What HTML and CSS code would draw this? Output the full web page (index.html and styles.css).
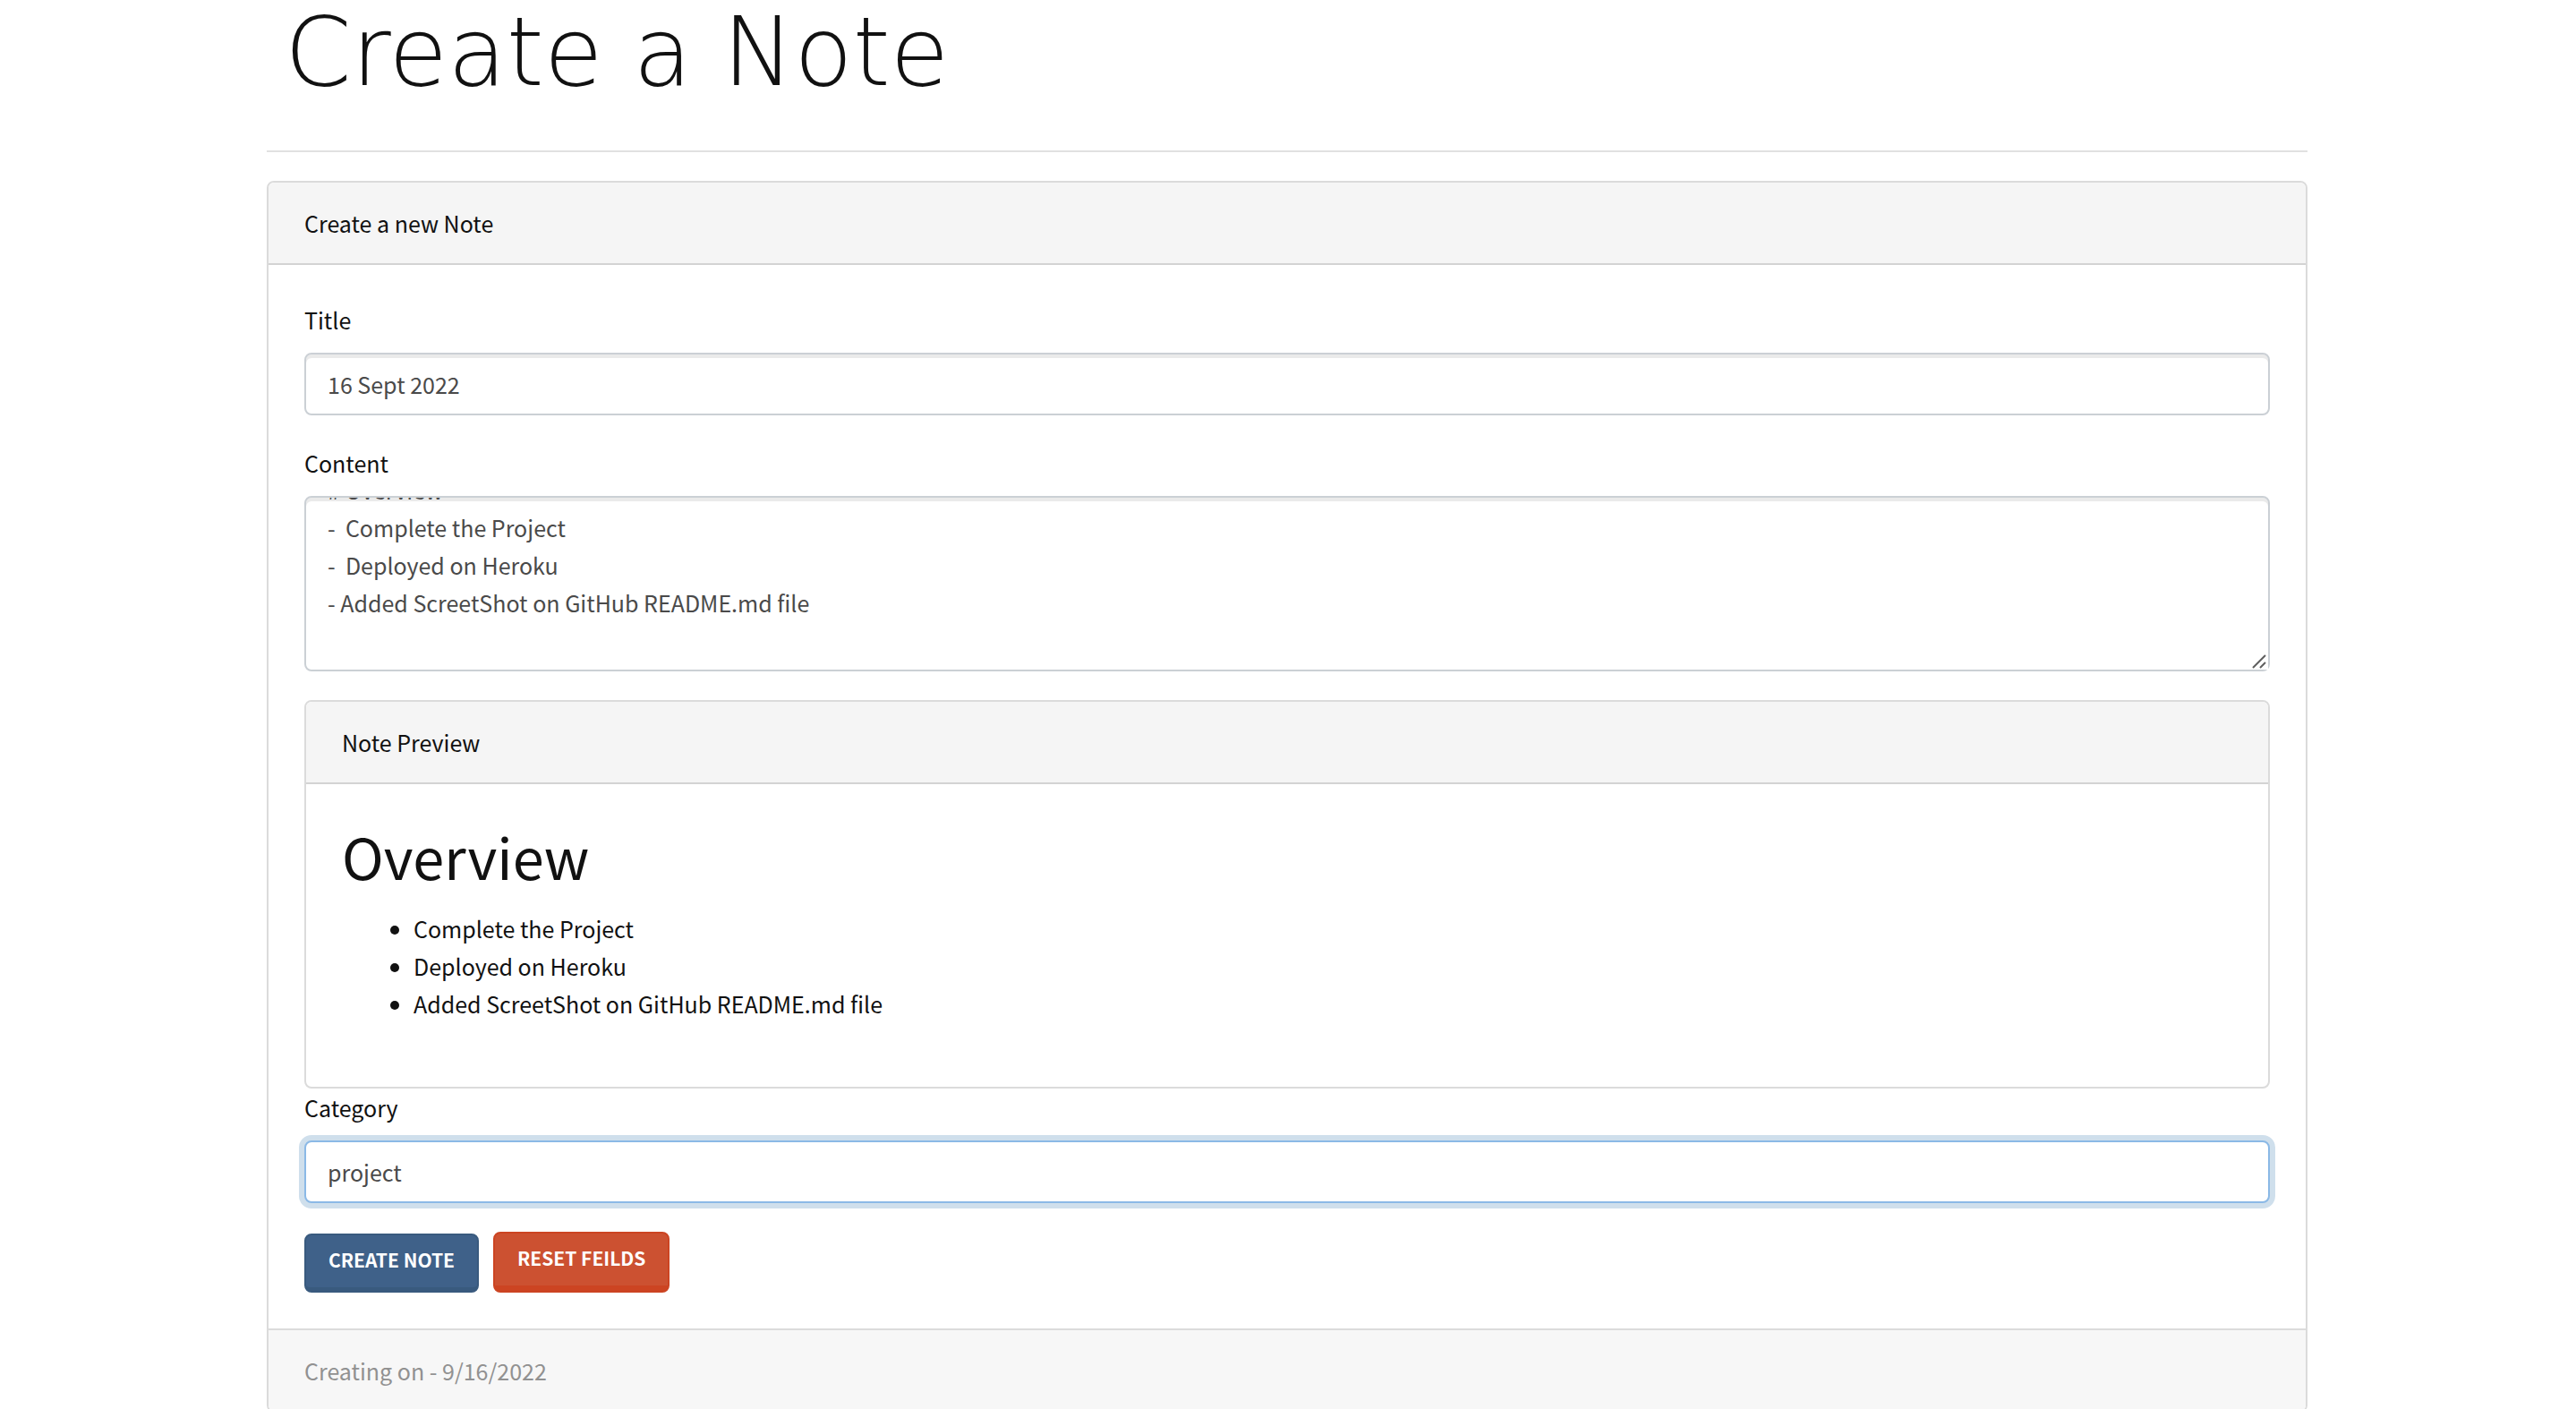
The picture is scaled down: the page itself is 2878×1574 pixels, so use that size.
FILE: index.html
```html
<!DOCTYPE html>
<html lang="en">
<head>
<meta charset="utf-8">
<title>Create a Note</title>
<link rel="stylesheet" href="styles.css">
</head>
<body>
<main class="container">
  <h1 class="page-title">Create a Note</h1>
  <hr class="divider">
  <section class="card">
    <header class="card-header">Create a new Note</header>
    <form class="card-body">
      <div class="field">
        <label class="label" for="title">Title</label>
        <input class="control" id="title" type="text" value="16 Sept 2022">
      </div>
      <div class="field">
        <label class="label" for="content">Content</label>
        <div class="control-wrap">
          <textarea class="control control-area" id="content" rows="4"># Overview
-  Complete the Project
-  Deployed on Heroku
- Added ScreetShot on GitHub README.md file
</textarea>
          <svg class="grip" viewBox="0 0 18 18" width="18" height="18" aria-hidden="true">
            <rect width="18" height="18" fill="#fff"/>
            <path d="M1 16 15 2M9 16l6-6" fill="none" stroke="#5f5f5f" stroke-width="2"/>
          </svg>
        </div>
      </div>
      <article class="card">
        <header class="card-header">Note Preview</header>
        <div class="card-body">
          <h2 class="note-heading">Overview</h2>
          <ul class="note-list">
            <li>Complete the Project</li>
            <li>Deployed on Heroku</li>
            <li>Added ScreetShot on GitHub README.md file</li>
          </ul>
        </div>
      </article>
      <div class="field">
        <label class="label" for="category">Category</label>
        <input class="control control-active" id="category" type="text" value="project">
      </div>
      <div class="actions">
        <button class="button button-primary" type="submit">Create Note</button>
        <button class="button button-danger" type="reset">Reset Feilds</button>
      </div>
    </form>
    <footer class="card-footer">Creating on - 9/16/2022</footer>
  </section>
</main>
<script src="script.js"></script>
</body>
</html>
```
FILE: styles.css
```css
* {
  box-sizing: border-box;
}

html {
  scrollbar-width: none;
}

body {
  margin: 0;
  padding-right: 2px;
  background: #fff;
  color: #111;
  font-family: "Noto Sans CJK SC", "Noto Sans", sans-serif;
  font-size: 25px;
  line-height: 42px;
}

.container {
  max-width: 2280px;
  margin: 0 auto;
}

.page-title {
  margin: 0;
  padding: 0 20px 52px;
  font-family: "DejaVu Sans", sans-serif;
  font-size: 107px;
  font-weight: 200;
  line-height: 116px;
}

.divider {
  height: 2px;
  margin: 0 0 32px;
  border: 0;
  background: #e1e1e1;
}

.card {
  border: 2px solid #dbdbdb;
  border-radius: 8px;
  background: #fff;
}

.card-header,
.card-footer {
  padding: 24px 40px;
  background: #f5f5f5;
}

.card-header {
  border-bottom: 2px solid #d3d3d3;
  border-radius: 6px 6px 0 0;
}

.card-footer {
  border-top: 2px solid #dbdbdb;
  border-radius: 0 0 6px 6px;
  background: #f7f7f7;
  color: #919191;
}

.card-body {
  padding: 40px;
}

.field {
  margin-bottom: 32px;
}

.label {
  display: block;
  margin-bottom: 16px;
}

.control {
  display: block;
  width: 100%;
  height: 70px;
  padding: 12px 24px;
  border: 2px solid #cbd0d5;
  border-radius: 8px;
  outline: 0;
  background: #fff;
  box-shadow: inset 0 4px 0 #eaeaea;
  color: #4a4a4a;
  font: inherit;
}

.control-wrap {
  position: relative;
}

.control-area {
  height: 196px;
  resize: vertical;
  scrollbar-width: none;
}

.grip {
  position: absolute;
  right: 2px;
  bottom: 2px;
  pointer-events: none;
}

.control-active {
  border-color: #8bb9e6;
  box-shadow: 0 0 0 6px #cfdfec;
}

.note-heading {
  margin: 0 0 20px;
  font-size: 63px;
  font-weight: 400;
  line-height: 80px;
}

.note-list {
  margin: 0 0 32px;
  padding-left: 80px;
}

.actions {
  display: flex;
  align-items: flex-end;
  gap: 16px;
}

.button {
  padding: 12px 25px 16px;
  border: 2px solid;
  border-radius: 8px;
  color: #fff;
  font: inherit;
  font-size: 21px;
  font-weight: 700;
  line-height: 30px;
  text-transform: uppercase;
}

.button-primary {
  border-color: #395a7e;
  border-bottom-width: 6px;
  background: #3f6189;
}

.button-danger {
  border-color: #cc4422;
  border-bottom-width: 8px;
  background: #cc5131;
}
```
FILE: script.js
```js
// Open the note at its last lines.
document.getElementById("content").scrollTop = 42;
```
